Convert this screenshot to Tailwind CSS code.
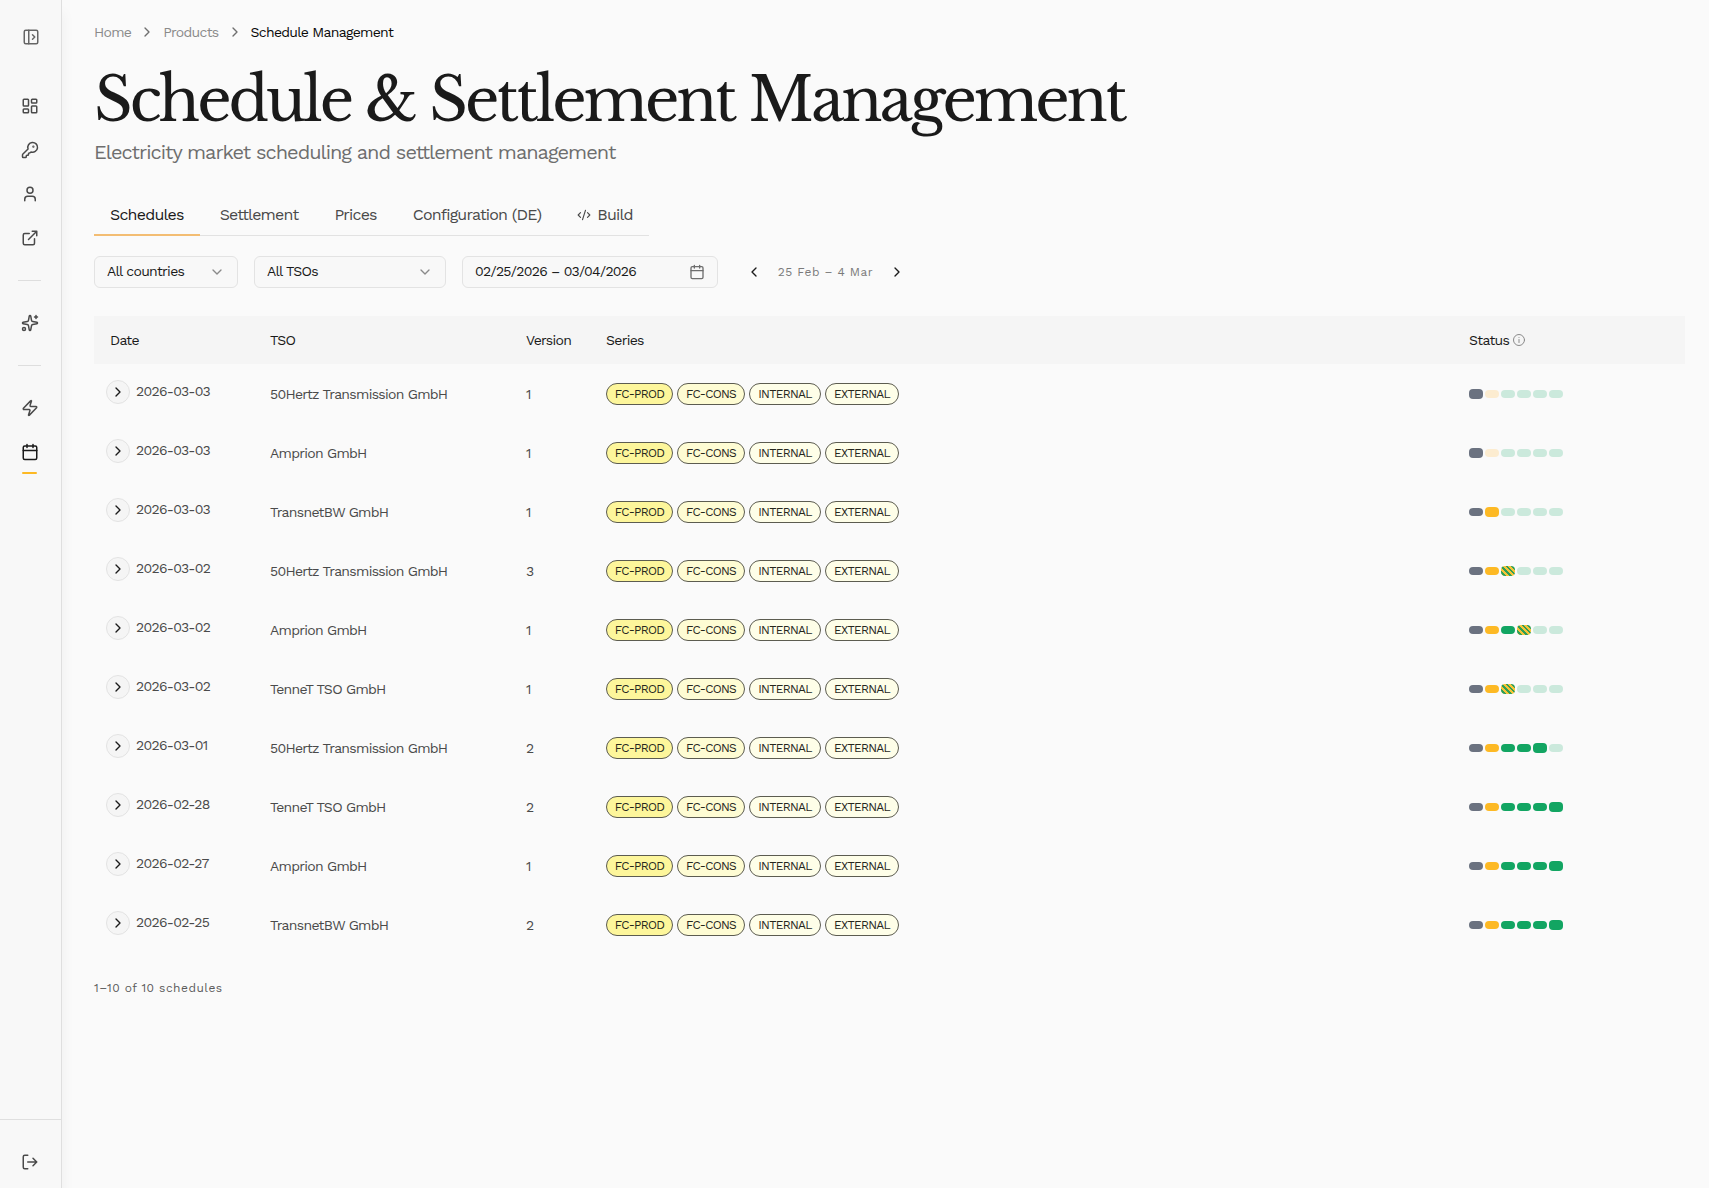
<!DOCTYPE html>
<html lang="en">
<head>
<meta charset="utf-8">
<meta name="viewport" content="width=device-width, initial-scale=1">
<title>Schedule Management</title>
<script src="https://cdn.jsdelivr.net/npm/@tailwindcss/browser@4"></script>
</head>
<body class="flex min-h-screen bg-[#fafafa] font-['Work_Sans',Inter,sans-serif] text-sm tracking-tighter text-[#4a4a4a]">
<svg class="hidden" aria-hidden="true">
  <symbol id="right" viewBox="0 0 24 24"><path d="m9 18 6-6-6-6"/></symbol>
  <symbol id="left" viewBox="0 0 24 24"><path d="m15 18-6-6 6-6"/></symbol>
  <symbol id="down" viewBox="0 0 24 24"><path d="m6 9 6 6 6-6"/></symbol>
  <symbol id="calendar" viewBox="0 0 24 24"><path d="M8 2v4M16 2v4M3 10h18"/><rect x="3" y="4" width="18" height="18" rx="2"/></symbol>
</svg>

<aside class="sticky top-0 flex h-screen w-[62px] shrink-0 flex-col border-r border-[#dfdfdf] bg-[#f8f8f8] shadow-[2px_12px_12px_rgba(0,0,0,0.04)]">
  <div class="flex h-[84px] pt-[15px] pl-[9px]">
    <button type="button" aria-label="Expand sidebar" class="flex size-11 items-center justify-center text-[#666]">
      <svg class="size-[18px] fill-none stroke-current stroke-2" viewBox="0 0 24 24" stroke-linecap="round" stroke-linejoin="round"><rect x="3" y="3" width="18" height="18" rx="2"/><path d="M9 3v18M14 9l3 3-3 3"/></svg>
    </button>
  </div>
  <nav class="flex flex-col pl-2 text-[#4a4a4a]" aria-label="Main">
    <a href="#" aria-label="Dashboard" class="flex size-11 items-center justify-center"><svg class="size-[18px] fill-none stroke-current stroke-2" viewBox="0 0 24 24" stroke-linejoin="round"><rect x="3" y="3" width="7" height="9" rx="1"/><rect x="14" y="3" width="7" height="5" rx="1"/><rect x="14" y="12" width="7" height="9" rx="1"/><rect x="3" y="16" width="7" height="5" rx="1"/></svg></a>
    <a href="#" aria-label="API keys" class="flex size-11 items-center justify-center"><svg class="size-[18px] fill-none stroke-current stroke-2" viewBox="0 0 24 24" stroke-linecap="round" stroke-linejoin="round"><path d="M2.586 17.414A2 2 0 0 0 2 18.828V21a1 1 0 0 0 1 1h3a1 1 0 0 0 1-1v-1a1 1 0 0 1 1-1h1a1 1 0 0 0 1-1v-1a1 1 0 0 1 1-1h.172a2 2 0 0 0 1.414-.586l.814-.814a6.5 6.5 0 1 0-4-4z"/><circle cx="16.5" cy="7.5" r=".5" fill="currentColor"/></svg></a>
    <a href="#" aria-label="Account" class="flex size-11 items-center justify-center"><svg class="size-[18px] fill-none stroke-current stroke-2" viewBox="0 0 24 24" stroke-linecap="round" stroke-linejoin="round"><path d="M19 21v-2a4 4 0 0 0-4-4H9a4 4 0 0 0-4 4v2"/><circle cx="12" cy="7" r="4"/></svg></a>
    <a href="#" aria-label="Open external" class="flex size-11 items-center justify-center"><svg class="size-[18px] fill-none stroke-current stroke-2" viewBox="0 0 24 24" stroke-linecap="round" stroke-linejoin="round"><path d="M15 3h6v6M10 14 21 3M18 13v6a2 2 0 0 1-2 2H5a2 2 0 0 1-2-2V8a2 2 0 0 1 2-2h6"/></svg></a>
    <hr class="my-5 ml-[10px] w-[23px] border-[#dedede]">
    <a href="#" aria-label="Assistant" class="flex size-11 items-center justify-center"><svg class="size-[18px] fill-none stroke-current stroke-2" viewBox="0 0 24 24" stroke-linecap="round" stroke-linejoin="round"><path d="M11.017 2.814a1 1 0 0 1 1.966 0l1.051 5.558a2 2 0 0 0 1.594 1.594l5.558 1.051a1 1 0 0 1 0 1.966l-5.558 1.051a2 2 0 0 0-1.594 1.594l-1.051 5.558a1 1 0 0 1-1.966 0l-1.051-5.558a2 2 0 0 0-1.594-1.594l-5.558-1.051a1 1 0 0 1 0-1.966l5.558-1.051a2 2 0 0 0 1.594-1.594zM20 2v4M22 4h-4"/><circle cx="4" cy="20" r="2"/></svg></a>
    <hr class="my-5 ml-[10px] w-[23px] border-[#dedede]">
    <a href="#" aria-label="Energy" class="flex size-11 items-center justify-center"><svg class="size-[18px] fill-none stroke-current stroke-2" viewBox="0 0 24 24" stroke-linecap="round" stroke-linejoin="round"><path d="M4 14a1 1 0 0 1-.78-1.63l9.9-10.2a.5.5 0 0 1 .86.46l-1.92 6.02A1 1 0 0 0 13 10h7a1 1 0 0 1 .78 1.63l-9.9 10.2a.5.5 0 0 1-.86-.46l1.92-6.02A1 1 0 0 0 11 14z"/></svg></a>
    <a href="#" aria-label="Schedules" aria-current="page" class="relative flex size-11 items-center justify-center text-[#1a1a1a]"><svg class="size-[18px] fill-none stroke-current stroke-2" stroke-linecap="round" stroke-linejoin="round"><use href="#calendar"/></svg><span class="absolute bottom-0 left-[14px] h-0.5 w-[15px] rounded-full bg-[#fdb924]"></span></a>
  </nav>
  <div class="mt-auto flex h-[69px] border-t border-[#dfdfdf] pt-5 pl-2">
    <button type="button" aria-label="Log out" class="flex size-11 items-center justify-center"><svg class="size-[18px] fill-none stroke-current stroke-2" viewBox="0 0 24 24" stroke-linecap="round" stroke-linejoin="round"><path d="M9 21H5a2 2 0 0 1-2-2V5a2 2 0 0 1 2-2h4M16 17l5-5-5-5M21 12H9"/></svg></button>
  </div>
</aside>

<main class="min-w-0 flex-1 pt-[22px] pr-6 pl-8">
  <nav aria-label="Breadcrumb">
    <ol class="flex h-5 items-center gap-2 text-[#8a8a8a]">
      <li><a href="#">Home</a></li>
      <li aria-hidden="true"><svg class="size-4 fill-none stroke-[#6e6e6e] stroke-2" stroke-linecap="round" stroke-linejoin="round"><use href="#right"/></svg></li>
      <li><a href="#">Products</a></li>
      <li aria-hidden="true"><svg class="size-4 fill-none stroke-[#6e6e6e] stroke-2" stroke-linecap="round" stroke-linejoin="round"><use href="#right"/></svg></li>
      <li aria-current="page" class="text-[#0a0a0a]">Schedule Management</li>
    </ol>
  </nav>
  <h1 class="mt-5 font-['Libre_Baskerville','Liberation_Serif',serif] text-6xl/[76px] tracking-tighter text-[#1a1a1a]">Schedule &amp; Settlement Management</h1>
  <p class="text-xl/7 tracking-tighter text-[#6e6e6e]">Electricity market scheduling and settlement management</p>

  <div role="tablist" class="mt-7 flex h-[42px] w-fit gap-1 border-b border-[#e2e2e2] text-base tracking-tighter">
    <button type="button" role="tab" aria-selected="true" class="-mb-px border-y-2 border-t-transparent border-b-[#f3bd73] px-4 tracking-tighter text-[#1a1a1a]">Schedules</button>
    <button type="button" role="tab" aria-selected="false" class="px-4">Settlement</button>
    <button type="button" role="tab" aria-selected="false" class="px-4">Prices</button>
    <button type="button" role="tab" aria-selected="false" class="px-4">Configuration (DE)</button>
    <button type="button" role="tab" aria-selected="false" class="flex items-center gap-1.5 px-4"><svg class="size-[14px] fill-none stroke-current stroke-2" viewBox="0 0 24 24" stroke-linecap="round" stroke-linejoin="round"><path d="m18 16 4-4-4-4M6 8l-4 4 4 4M14.5 4l-5 16"/></svg>Build</button>
  </div>

  <div class="mt-5 flex items-center gap-4 text-[#1a1a1a]">
    <div class="relative">
      <select aria-label="Country" class="h-8 w-36 appearance-none rounded-md border border-[#e3e3e3] bg-[#f8f8f8] px-3 pb-0.5 tracking-tighter"><option>All countries</option></select>
      <svg class="pointer-events-none absolute top-2 right-[13px] size-4 fill-none stroke-[#8a8a8a] stroke-2" stroke-linecap="round" stroke-linejoin="round"><use href="#down"/></svg>
    </div>
    <div class="relative">
      <select aria-label="TSO" class="h-8 w-48 appearance-none rounded-md border border-[#e3e3e3] bg-[#f8f8f8] px-3 pb-0.5 tracking-tighter"><option>All TSOs</option></select>
      <svg class="pointer-events-none absolute top-2 right-[13px] size-4 fill-none stroke-[#8a8a8a] stroke-2" stroke-linecap="round" stroke-linejoin="round"><use href="#down"/></svg>
    </div>
    <div class="relative">
      <input type="text" aria-label="Date range" value="02/25/2026 – 03/04/2026" class="h-8 w-64 rounded-md border border-[#e3e3e3] bg-[#f8f8f8] px-3 pb-0.5 tracking-tighter">
      <svg class="pointer-events-none absolute top-2 right-[13px] size-4 fill-none stroke-[#6e6e6e] stroke-2" stroke-linecap="round" stroke-linejoin="round"><use href="#calendar"/></svg>
    </div>
    <div class="ml-3 flex items-center">
      <button type="button" aria-label="Previous period" class="flex h-8 w-4 items-center"><svg class="size-4 fill-none stroke-current stroke-2" stroke-linecap="round" stroke-linejoin="round"><use href="#left"/></svg></button>
      <span class="w-[127px] text-center text-xs tracking-[0.04em] text-[#7a7a7a]">25 Feb – 4 Mar</span>
      <button type="button" aria-label="Next period" class="flex h-8 w-4 items-center"><svg class="size-4 fill-none stroke-current stroke-2" stroke-linecap="round" stroke-linejoin="round"><use href="#right"/></svg></button>
    </div>
  </div>

  <table class="mt-7 w-full table-fixed text-left">
    <colgroup><col class="w-40"><col class="w-64"><col class="w-20"><col><col class="w-[232px]"></colgroup>
    <thead class="bg-[#f5f5f5] text-[#1a1a1a]">
      <tr class="h-12">
        <th scope="col" class="px-4 font-normal">Date</th>
        <th scope="col" class="px-4 font-normal">TSO</th>
        <th scope="col" class="px-4 font-normal">Version</th>
        <th scope="col" class="px-4 font-normal">Series</th>
        <th scope="col" class="px-4 font-normal"><span class="flex items-center gap-1">Status <svg class="size-3 fill-none stroke-[#8a8a8a] stroke-2" viewBox="0 0 24 24" stroke-linecap="round"><circle cx="12" cy="12" r="11"/><path d="M12 17v-6M12 7v.01"/></svg></span></th>
      </tr>
    </thead>
    <tbody id="rows"></tbody>
  </table>
  <p class="mt-6 text-xs/5 tracking-[0.04em] text-[#5a5a5a]">1–10 of 10 schedules</p>
</main>

<script>
const schedules = [
  ['2026-03-03', '50Hertz Transmission GmbH', 1, 'D a o o o o'],
  ['2026-03-03', 'Amprion GmbH', 1, 'D a o o o o'],
  ['2026-03-03', 'TransnetBW GmbH', 1, 'd A o o o o'],
  ['2026-03-02', '50Hertz Transmission GmbH', 3, 'd y P o o o'],
  ['2026-03-02', 'Amprion GmbH', 1, 'd y g P o o'],
  ['2026-03-02', 'TenneT TSO GmbH', 1, 'd y P o o o'],
  ['2026-03-01', '50Hertz Transmission GmbH', 2, 'd y g g G o'],
  ['2026-02-28', 'TenneT TSO GmbH', 2, 'd y g g g G'],
  ['2026-02-27', 'Amprion GmbH', 1, 'd y g g g G'],
  ['2026-02-25', 'TransnetBW GmbH', 2, 'd y g g g G'],
];
// Lower case: a passed or pending step; upper case: the current one.
const steps = {
  d: 'h-2 w-[14px] rounded-full bg-[#6b7280]',
  D: 'h-[10px] w-[14px] rounded bg-[#6b7280]',
  a: 'h-2 w-[14px] rounded-full bg-[#fcecd0]',
  y: 'h-2 w-[14px] rounded-full bg-[#fdb924]',
  A: 'h-[10px] w-[14px] rounded bg-[#fdb924]',
  o: 'h-2 w-[14px] rounded-full bg-[#cbe9dc]',
  g: 'h-2 w-[14px] rounded-full bg-[#12a562]',
  G: 'h-[10px] w-[14px] rounded bg-[#12a562]',
  P: 'h-[10px] w-[14px] rounded bg-[repeating-linear-gradient(45deg,#f6c338_0_2px,#2f9f55_2px_4px)]',
};
document.getElementById('rows').innerHTML = schedules.map(([date, tso, version, status]) => `
  <tr class="h-[59px]">
    <td class="px-3"><div class="mb-1 flex items-center gap-[6px]"><button type="button" aria-label="Expand ${date} ${tso}" class="flex size-6 items-center justify-center rounded-full border border-[#e3e3e3] bg-[#f5f5f5] text-[#1a1a1a]"><svg class="size-4 fill-none stroke-current stroke-2" stroke-linecap="round" stroke-linejoin="round"><use href="#right"/></svg></button><span class="pb-0.5">${date}</span></div></td>
    <td class="px-4 pt-px">${tso}</td>
    <td class="px-4 pt-px">${version}</td>
    <td class="px-4"><div class="flex gap-1 text-xs text-[#26261c]">
      <span class="flex h-[22px] w-[67px] items-center justify-center rounded-full border border-[#5c5c50] bg-[#fdf69b]">FC-PROD</span>
      <span class="flex h-[22px] w-[68px] items-center justify-center rounded-full border border-[#5c5c50] bg-[#fefcd3]">FC-CONS</span>
      <span class="flex h-[22px] w-[72px] items-center justify-center rounded-full border border-[#5c5c50] bg-[#fefee8]">INTERNAL</span>
      <span class="flex h-[22px] w-[74px] items-center justify-center rounded-full border border-[#5c5c50] bg-[#fefee8]">EXTERNAL</span>
    </div></td>
    <td class="px-4"><div class="flex items-center gap-0.5">${status.split(' ').map(s => `<span class="${steps[s]}"></span>`).join('')}</div></td>
  </tr>`).join('');
</script>
</body>
</html>
